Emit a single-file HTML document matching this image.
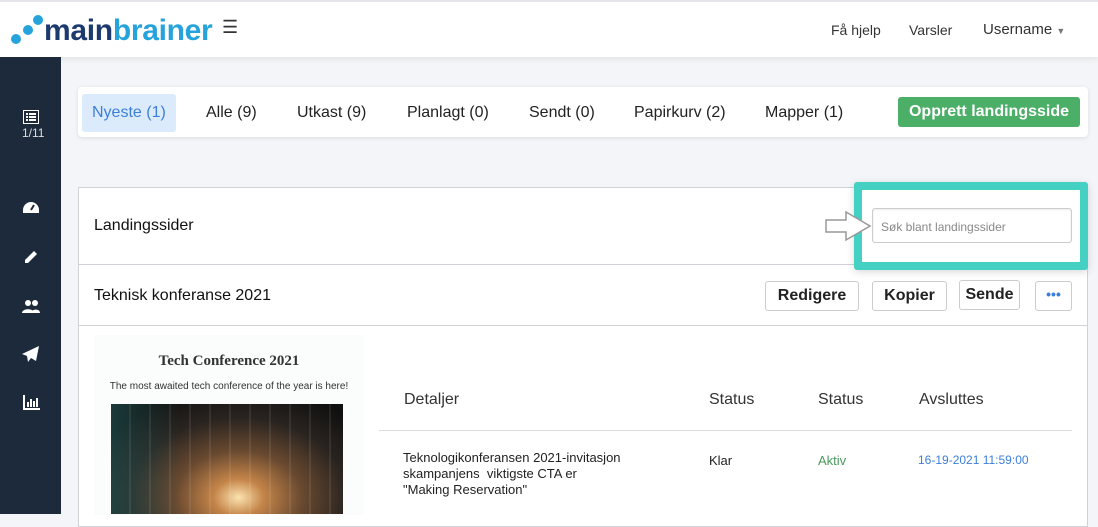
<!DOCTYPE html>
<html><head><meta charset="utf-8"><style>
*{margin:0;padding:0;box-sizing:border-box}
body{width:1098px;height:514px;overflow:hidden;background:#f3f5f8;font-family:"Liberation Sans",sans-serif;position:relative;color:#222}
.hdr{position:absolute;left:0;top:0;width:1098px;height:57px;background:#fff;border-top:2px solid #e4e6ea;box-shadow:0 2px 6px rgba(0,0,0,.08)}
.side{position:absolute;left:0;top:57px;width:61px;height:457px;background:#1c2a3c}
.a{position:absolute;white-space:nowrap}
.tabs{position:absolute;left:78px;top:87px;width:1010px;height:50px;background:#fff;border-radius:4px;box-shadow:0 1px 4px rgba(0,0,0,.1)}
.tab{position:absolute;top:113px;font-size:16px;color:#222;transform:translateY(-50%)}
.card{position:absolute;left:78px;top:187px;width:1010px;height:340px;background:#fff;border:1px solid #cfd3d8}
.btn{position:absolute;top:281px;height:30px;border:1px solid #ccc;border-radius:3px;background:#fff;font-weight:bold;font-size:16px;text-align:center;line-height:28px}
.ic{position:absolute;left:22px;width:18px;height:16px;fill:#fff}
</style></head><body>
<div class="hdr"></div>
<svg class="a" style="left:10px;top:12px" width="36" height="34"><circle cx="6" cy="27" r="5" fill="#27a3dc"/><circle cx="18" cy="18" r="5" fill="#27a3dc"/><circle cx="28" cy="8" r="5" fill="#27a3dc"/></svg>
<div class="a" style="left:44px;top:14px;font-size:30px;font-weight:bold;letter-spacing:-0.3px;line-height:34px"><span style="color:#1c3a6e">main</span><span style="color:#27a3dc">brainer</span></div>
<div class="a" style="left:222px;top:17px;font-size:18px;color:#333">☰</div>
<div class="a" style="left:831px;top:22px;font-size:14px;color:#333">Få hjelp</div>
<div class="a" style="left:909px;top:22px;font-size:14px;color:#333">Varsler</div>
<div class="a" style="left:983px;top:21px;font-size:15px;color:#333">Username <span style="font-size:9px;color:#777">▼</span></div>
<div class="side"></div>
<svg class="a" style="left:23px;top:110px" width="16" height="14"><rect x="0.5" y="0.5" width="15" height="13" fill="none" stroke="#fff"/><rect x="3" y="3" width="2" height="2" fill="#fff"/><rect x="6" y="3" width="7" height="2" fill="#fff"/><rect x="3" y="6" width="2" height="2" fill="#fff"/><rect x="6" y="6" width="7" height="2" fill="#fff"/><rect x="3" y="9" width="2" height="2" fill="#fff"/><rect x="6" y="9" width="7" height="2" fill="#fff"/></svg>
<div class="a" style="left:22px;top:126px;font-size:12px;color:#ddd">1/11</div>
<svg class="ic" style="top:200px" viewBox="0 0 18 16"><path d="M9 2A8 8 0 0 0 1 10v3h16v-3A8 8 0 0 0 9 2z"/><path d="M9 10l3-5" stroke="#1c2a3c" stroke-width="2"/></svg>
<svg class="ic" style="top:248px" viewBox="0 0 18 16"><path d="M3 12l9-9 3 3-9 9H3z"/></svg>
<svg class="ic" style="top:298px" viewBox="0 0 18 16"><circle cx="6" cy="5" r="3"/><circle cx="13" cy="5" r="3"/><path d="M0 15c0-5 12-5 12 0zM9 15c0-4 9-5 9 0z"/></svg>
<svg class="ic" style="top:346px" viewBox="0 0 18 16"><path d="M17 0L0 8l5 2 1 6 3-4 5 3z"/></svg>
<svg class="ic" style="top:395px" viewBox="0 0 18 16"><path d="M1 0h2v13h15v2H1z M5 7h2v5H5z M8 4h2v8H8z M11 6h2v6h-2z M14 3h2v9h-2z"/></svg>
<div class="tabs"></div>
<div class="a" style="left:82px;top:94px;width:94px;height:38px;background:#dcebfc;border-radius:3px"></div>
<div class="tab" style="left:92px;color:#3c7fd9">Nyeste (1)</div>
<div class="tab" style="left:206px">Alle (9)</div>
<div class="tab" style="left:297px">Utkast (9)</div>
<div class="tab" style="left:407px">Planlagt (0)</div>
<div class="tab" style="left:529px">Sendt (0)</div>
<div class="tab" style="left:634px">Papirkurv (2)</div>
<div class="tab" style="left:765px">Mapper (1)</div>
<div class="a" style="left:898px;top:97px;width:182px;height:30px;background:#4caf67;border-radius:3px;color:#fff;font-weight:bold;font-size:16px;text-align:center;line-height:30px">Opprett landingsside</div>
<div class="card"></div>
<div class="a" style="left:79px;top:264px;width:1009px;height:1px;background:#cfd3d8"></div>
<div class="a" style="left:79px;top:325px;width:1009px;height:1px;background:#cfd3d8"></div>
<div class="a" style="left:94px;top:217px;font-size:16px;color:#111">Landingssider</div>
<div class="a" style="left:94px;top:287px;font-size:16px;color:#111">Teknisk konferanse 2021</div>
<div class="a" style="left:854px;top:182px;width:234px;height:88px;border:8px solid #45d0c4;border-radius:3px;background:#fff;box-shadow:0 2px 8px rgba(0,0,0,.15)"></div>
<div class="a" style="left:872px;top:208px;width:200px;height:35px;border:1px solid #ccc;border-radius:3px;font-size:12px;color:#888;padding:11px 0 0 8px;box-shadow:inset 0 1px 2px rgba(0,0,0,.08)">Søk blant landingssider</div>
<svg class="a" style="left:824px;top:210px" width="50" height="32"><path d="M2 10h20V2l24 14-24 14v-8H2z" fill="#fff" stroke="#999" stroke-width="1.5"/></svg>
<div class="btn" style="left:765px;width:94px">Redigere</div>
<div class="btn" style="left:872px;width:75px">Kopier</div>
<div class="btn" style="left:959px;width:61px;top:280px">Sende</div>
<div class="btn" style="left:1035px;width:37px;color:#3c7fd9;line-height:24px;font-size:14px">•••</div>
<div class="a" style="left:94px;top:335px;width:270px;height:180px;background:#fbfcfc"></div>
<div class="a" style="left:94px;top:353px;width:270px;text-align:center;font-family:'Liberation Serif',serif;font-weight:bold;font-size:15px;color:#333">Tech Conference 2021</div>
<div class="a" style="left:94px;top:381px;width:270px;text-align:center;font-size:10px;color:#333">The most awaited tech conference of the year is here!</div>
<div class="a" style="left:111px;top:404px;width:232px;height:110px;background:radial-gradient(ellipse at 55% 85%,#fbe3b0 0,#c48448 14%,#6a4a30 35%,#2a2420 60%,#101010 85%),#111"></div>
<div class="a" style="left:111px;top:404px;width:232px;height:110px;background:repeating-linear-gradient(90deg,rgba(255,255,255,0) 0 18px,rgba(255,255,255,.08) 18px 20px),linear-gradient(90deg,rgba(40,110,110,.45),rgba(0,0,0,0) 30%)"></div>
<div class="a" style="left:404px;top:391px;font-size:16px;color:#333">Detaljer</div>
<div class="a" style="left:709px;top:391px;font-size:16px;color:#333">Status</div>
<div class="a" style="left:818px;top:391px;font-size:16px;color:#333">Status</div>
<div class="a" style="left:919px;top:391px;font-size:16px;color:#333">Avsluttes</div>
<div class="a" style="left:379px;top:430px;width:693px;height:1px;background:#ddd"></div>
<div class="a" style="left:403px;top:450px;font-size:13px;line-height:16px;color:#222">Teknologikonferansen 2021-invitasjon<br>skampanjens &nbsp;viktigste CTA er<br>"Making Reservation"</div>
<div class="a" style="left:709px;top:453px;font-size:13px">Klar</div>
<div class="a" style="left:818px;top:453px;font-size:13px;color:#4a9a5e">Aktiv</div>
<div class="a" style="left:918px;top:453px;font-size:12px;color:#3c7fd9">16-19-2021 11:59:00</div>
</body></html>
